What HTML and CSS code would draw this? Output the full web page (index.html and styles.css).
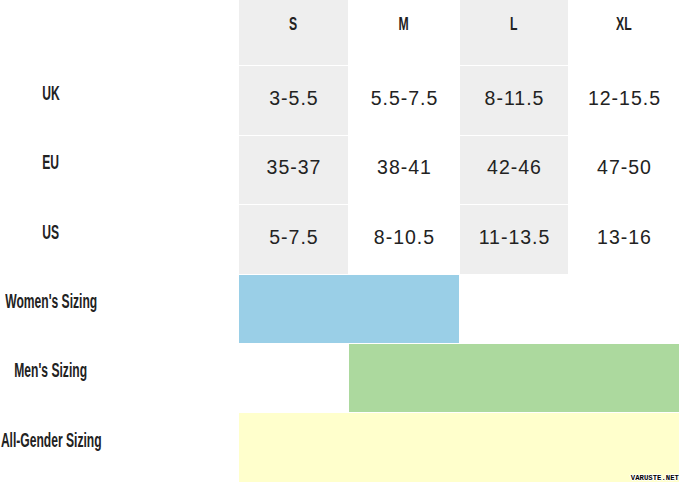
FILE: index.html
```html
<!DOCTYPE html>
<html lang="en">
<head>
<meta charset="utf-8">
<title>Size chart</title>
<link rel="stylesheet" href="styles.css">
</head>
<body>
<div class="chart">
  <div class="label"></div>
  <div class="cell head shade"><span class="cond">S</span></div>
  <div class="cell head"><span class="cond">M</span></div>
  <div class="cell head shade"><span class="cond">L</span></div>
  <div class="cell head"><span class="cond">XL</span></div>

  <div class="label"><span class="cond">UK</span></div>
  <div class="cell val shade">3-5.5</div>
  <div class="cell val">5.5-7.5</div>
  <div class="cell val shade">8-11.5</div>
  <div class="cell val">12-15.5</div>

  <div class="label"><span class="cond">EU</span></div>
  <div class="cell val shade">35-37</div>
  <div class="cell val">38-41</div>
  <div class="cell val shade">42-46</div>
  <div class="cell val">47-50</div>

  <div class="label"><span class="cond">US</span></div>
  <div class="cell val shade">5-7.5</div>
  <div class="cell val">8-10.5</div>
  <div class="cell val shade">11-13.5</div>
  <div class="cell val">13-16</div>

  <div class="label"><span class="cond">Women's Sizing</span></div>
  <div class="bar women"></div>

  <div class="label"><span class="cond">Men's Sizing</span></div>
  <div class="bar men"></div>

  <div class="label"><span class="cond">All-Gender Sizing</span></div>
  <div class="bar all"></div>
</div>
<div class="mark">VARUSTE.NET</div>
</body>
</html>
```

FILE: styles.css
```css
html, body {
  margin: 0;
  padding: 0;
  background: #ffffff;
}

body {
  width: 679px;
  height: 482px;
  position: relative;
  overflow: hidden;
  font-family: "Liberation Sans", Arial, sans-serif;
  color: #222222;
}

.chart {
  display: grid;
  grid-template-columns: 238px 109px 110px 108px 110px;
  grid-template-rows: 65px 69px 68px 69px 68px 68px 69px;
  gap: 1px;
}

.label {
  grid-column: 1;
  width: 102px;
  display: flex;
  align-items: center;
  justify-content: center;
  padding-bottom: 15px;
  box-sizing: border-box;
  font-size: 19.5px;
}

.cond {
  display: inline-block;
  font-weight: bold;
  white-space: nowrap;
  transform: scaleX(0.62);
  color: #222222;
}

.cell {
  display: flex;
  align-items: center;
  justify-content: center;
  box-sizing: border-box;
}

.shade {
  background: #eeeeee;
}

.head {
  font-size: 18.5px;
  padding-bottom: 17px;
}

.head .cond {
  transform: scaleX(0.66);
}

.val {
  font-size: 19.5px;
  letter-spacing: 1px;
  padding-bottom: 5px;
  padding-left: 1px;
}

.bar {
  height: 100%;
}

.women {
  grid-column: 2 / span 2;
  background: #9acfe7;
}

.men {
  grid-column: 3 / span 3;
  background: #acd99e;
}

.all {
  grid-column: 2 / span 4;
  background: #ffffcc;
}

.mark {
  position: absolute;
  right: 0;
  bottom: 0;
  font-family: "Liberation Mono", "DejaVu Sans Mono", monospace;
  font-weight: bold;
  font-size: 7.3px;
  line-height: 8px;
  color: #000000;
  text-shadow: 1px 0 0 #ffffff, -1px 0 0 #ffffff, 0 1px 0 #ffffff, 0 -1px 0 #ffffff;
}
```
